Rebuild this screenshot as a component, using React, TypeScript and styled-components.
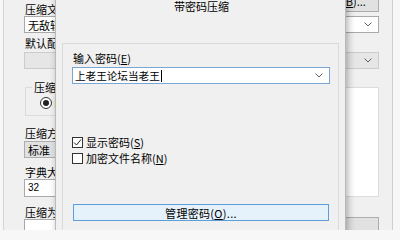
import React from "react";
import styled, { createGlobalStyle } from "styled-components";

const Global = createGlobalStyle`
  html, body { margin: 0; padding: 0; background: #f7f7f7; }
  body {
    font-family: "Noto Sans CJK SC", "Noto Sans", sans-serif;
    font-size: 11px;
    color: #000;
  }
  * { box-sizing: border-box; }
  u { text-underline-offset: 1px; }
`;

const Desktop = styled.div`
  position: relative;
  width: 400px;
  height: 230px;
  overflow: hidden;
  background: #f7f7f7;
`;

const MainWindow = styled.div`
  margin-left: 3px;
  margin-top: -10px;
  width: 390px;
  height: 262px;
  background: #f0f0f0;
  border-left: 1px solid #d4d4d4;
  border-right: 1px solid #cfcfcf;
  padding: 0 13px 0 20px;
  display: flex;
  flex-direction: column;
`;

const HeaderRow = styled.div`
  display: flex;
  justify-content: space-between;
  height: 26px;
`;

const FieldLabel = styled.div<{ $mt?: number }>`
  line-height: 14px;
  white-space: nowrap;
  margin-top: ${(p) => p.$mt ?? 0}px;
  padding-left: 1px;
`;

const HeaderLabel = styled(FieldLabel)`
  align-self: flex-end;
`;

const WinButton = styled.div<{ $w?: number; $mt?: number }>`
  width: ${(p) => (p.$w ? `${p.$w}px` : "auto")};
  height: 22px;
  margin-top: ${(p) => p.$mt ?? 0}px;
  background: #e1e1e1;
  border: 1px solid #adadad;
  display: flex;
  align-items: center;
  justify-content: center;
  white-space: nowrap;
  line-height: 14px;
`;

const Combo = styled.div<{ $variant: "white" | "button" | "disabled"; $mt?: number; $h?: number }>`
  height: ${(p) => p.$h ?? 17}px;
  margin-top: ${(p) => p.$mt ?? 0}px;
  display: flex;
  align-items: center;
  padding: 0 6px 0 3px;
  white-space: nowrap;
  line-height: 14px;
  background: ${(p) =>
    p.$variant === "white" ? "#ffffff" : p.$variant === "button" ? "#e1e1e1" : "#e6e6e6"};
  border: 1px solid
    ${(p) => (p.$variant === "white" ? "#a9a9a9" : p.$variant === "button" ? "#adadad" : "#cccccc")};
`;

const ComboText = styled.span<{ $small?: boolean }>`
  flex: 1;
  overflow: hidden;
  font-size: ${(p) => (p.$small ? "10px" : "11px")};
  font-family: ${(p) => (p.$small ? '"Liberation Sans", sans-serif' : "inherit")};
`;

const ChevronSvg = styled.svg`
  flex: none;
  width: 8px;
  height: 5px;
`;

const Chevron = () => (
  <ChevronSvg viewBox="0 0 8 5">
    <polyline points="0.5,0.5 4,4 7.5,0.5" fill="none" stroke="#606060" strokeWidth="1" />
  </ChevronSvg>
);

const Columns = styled.div`
  display: grid;
  grid-template-columns: 1fr 1fr;
  column-gap: 14px;
  margin-top: 12px;
`;

const Column = styled.div`
  display: flex;
  flex-direction: column;
`;

const GroupBox = styled.fieldset`
  margin: 0 0 0 1px;
  padding: 3px 6px 5px 6px;
  border: 1px solid #dcdcdc;
  min-width: 0;
`;

const Legend = styled.legend`
  padding: 0 2px;
  line-height: 12px;
  font-size: 11px;
`;

const RadioRow = styled.div`
  display: flex;
  align-items: center;
  gap: 2px;
  margin-left: 8px;
  line-height: 14px;
`;

const RadioDot = styled.span`
  width: 12px;
  height: 12px;
  border-radius: 50%;
  border: 1px solid #333;
  background: #fff;
  display: flex;
  align-items: center;
  justify-content: center;
  &::after {
    content: "";
    width: 6px;
    height: 6px;
    border-radius: 50%;
    background: #222;
  }
`;

const OptionsPanel = styled.div`
  height: 110px;
  margin-top: 6px;
  background: #ffffff;
  border: 1px solid #dcdcdc;
`;

const WhiteInput = styled.div`
  height: 22px;
  background: #fff;
  border: 1px solid #a9a9a9;
`;

/* ---------- dialog ---------- */

const Dialog = styled.div`
  position: absolute;
  left: 55px;
  top: -10px;
  width: 291px;
  height: 250px;
  background: #f0f0f0;
  border: 1px solid #b9b9b9;
  box-shadow: 2px 2px 7px rgba(0, 0, 0, 0.3);
  display: flex;
  flex-direction: column;
`;

const TitleBar = styled.div`
  height: 30px;
  display: flex;
  align-items: center;
  justify-content: center;
  font-size: 11px;
  line-height: 14px;
  padding-left: 2px;
`;

const DialogBody = styled.div`
  flex: 1;
  padding: 22px 6px 0 6px;
  display: flex;
  flex-direction: column;
`;

const PasswordPanel = styled.div`
  flex: 1;
  border: 1px solid #dadada;
  padding: 7px 8px 0 9px;
  display: flex;
  flex-direction: column;
`;

const PwCombo = styled.div`
  height: 17px;
  margin-top: 2px;
  background: #fff;
  border: 1px solid #7aa6d4;
  display: flex;
  align-items: center;
  padding: 0 6px 0 2px;
  line-height: 14px;
`;

const PwText = styled.span`
  white-space: nowrap;
  font-size: 10.6px;
`;

const Caret = styled.span`
  width: 1px;
  height: 12px;
  background: #000;
  margin-left: 1px;
`;

const Spacer = styled.span`
  flex: 1;
`;

const CheckRow = styled.div<{ $mt?: number }>`
  height: 16px;
  margin-top: ${(p) => p.$mt ?? 0}px;
  display: flex;
  align-items: center;
  gap: 3px;
  line-height: 14px;
  white-space: nowrap;
`;

const CheckBox = styled.span`
  width: 11px;
  height: 11px;
  border: 1px solid #333;
  background: #fff;
  display: flex;
  align-items: center;
  justify-content: center;
`;

const CheckMark = () => (
  <svg width="9" height="9" viewBox="0 0 9 9">
    <polyline points="1,4.5 3.5,7 8,1.5" fill="none" stroke="#222" strokeWidth="1" />
  </svg>
);

const ManageButton = styled.div`
  height: 17px;
  margin: 38px 1px 0 1px;
  background: #e5f1fb;
  border: 1px solid #5b9ed9;
  display: flex;
  align-items: center;
  justify-content: center;
  line-height: 14px;
  letter-spacing: 0.3px;
`;

export default function App() {
  return (
    <Desktop>
      <Global />
      <MainWindow>
        <HeaderRow>
          <HeaderLabel>
            压缩文件名(<u>A</u>)
          </HeaderLabel>
          <WinButton $w={72}>
            浏览(<u>B</u>)...
          </WinButton>
        </HeaderRow>
        <Combo $variant="white">
          <ComboText>无敌较量.rar</ComboText>
          <Chevron />
        </Combo>
        <FieldLabel $mt={3}>默认配置</FieldLabel>
        <Combo $variant="disabled" $mt={2}>
          <ComboText />
          <Chevron />
        </Combo>
        <Columns>
          <Column>
            <GroupBox>
              <Legend>压缩文件格式</Legend>
              <RadioRow>
                <RadioDot />
                <span>RAR</span>
              </RadioRow>
            </GroupBox>
            <FieldLabel $mt={10}>
              压缩方式(<u>C</u>)
            </FieldLabel>
            <Combo $variant="button" $mt={1}>
              <ComboText>标准</ComboText>
              <Chevron />
            </Combo>
            <FieldLabel $mt={7}>
              字典大小(<u>D</u>)
            </FieldLabel>
            <Combo $variant="white" $h={18}>
              <ComboText $small>32</ComboText>
              <Chevron />
            </Combo>
            <FieldLabel $mt={8}>
              压缩为分卷、大小(<u>V</u>)
            </FieldLabel>
            <WhiteInput />
          </Column>
          <Column>
            <OptionsPanel />
            <WinButton $mt={20}>
              设置密码(<u>P</u>)...
            </WinButton>
          </Column>
        </Columns>
      </MainWindow>

      <Dialog>
        <TitleBar>带密码压缩</TitleBar>
        <DialogBody>
          <PasswordPanel>
            <FieldLabel>
              输入密码(<u>E</u>)
            </FieldLabel>
            <PwCombo>
              <PwText>上老王论坛当老王</PwText>
              <Caret />
              <Spacer />
              <Chevron />
            </PwCombo>
            <CheckRow $mt={50}>
              <CheckBox>
                <CheckMark />
              </CheckBox>
              <span>
                显示密码(<u>S</u>)
              </span>
            </CheckRow>
            <CheckRow>
              <CheckBox />
              <span>
                加密文件名称(<u>N</u>)
              </span>
            </CheckRow>
            <ManageButton>
              管理密码(<u>O</u>)...
            </ManageButton>
          </PasswordPanel>
        </DialogBody>
      </Dialog>
    </Desktop>
  );
}
